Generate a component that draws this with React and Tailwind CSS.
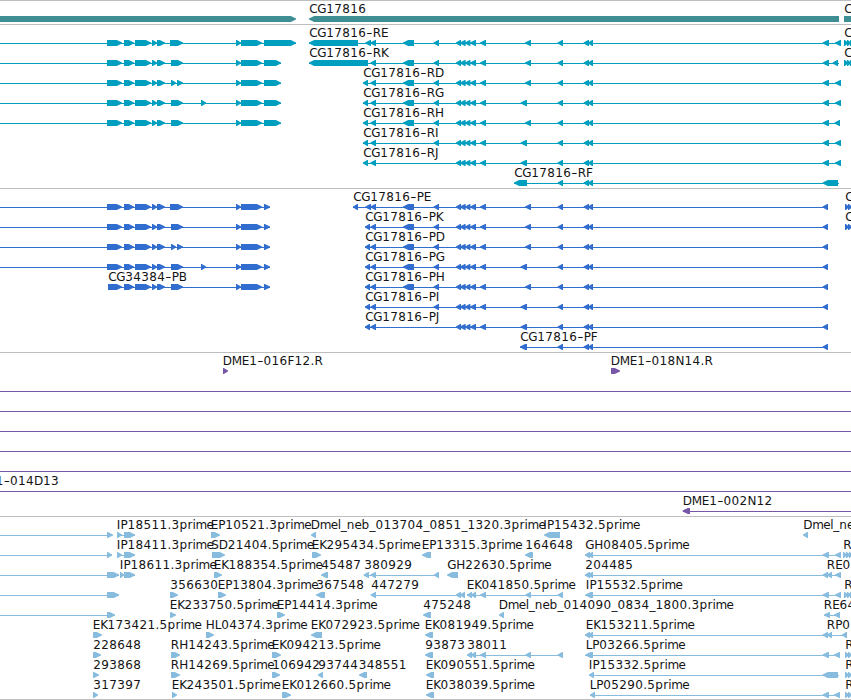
import React from 'react';

const ADVANCE = {
  C: 8, G: 9, D: 9, M: 10, E: 7.4, K: 7.4, R: 8.4, H: 9, L: 6.5, P: 7, I: 3.6, J: 4, F: 7, N: 9, S: 7.5,
  '-': 6.4, '.': 4, _: 6, p: 8, r: 5, i: 3, m: 11, e: 7, l: 3, n: 7.6, b: 8,
};

const placed = (text, start) => {
  let x = start;
  return text.split(/(-)/).map((part) => {
    const xs = [...part].map((ch) => {
      const at = x;
      x += ADVANCE[ch] ?? 8;
      return at;
    });
    return { part, xs };
  });
};

function Label({ text, x }) {
  return (
    <text y="10" fontSize="12" fill="#141414">
      {placed(text, x).map(({ part, xs }, i) => (part === '-'
        ? <tspan key={i} x={xs[0]} textLength="6.2" lengthAdjust="spacingAndGlyphs">-</tspan>
        : <tspan key={i} x={xs.join(' ')}>{part}</tspan>))}
    </text>
  );
}

const right = (...spans) => ({ dir: 1, spans });
const left = (...spans) => ({ dir: -1, spans });
const feature = (label, x, glyph, from, to) => ({ label, x, ...glyph, from, to });

const shape = ([a, b], dir, flat) => {
  if (flat) return `M${a} 13H${b}V19H${a}Z`;
  const tip = Math.min(6, b - a);
  return dir > 0
    ? `M${a} 13H${b - tip + 0.8}L${b} 15.6V16.4L${b - tip + 0.8} 19H${a}Z`
    : `M${b} 13H${a + tip - 0.8}L${a} 15.6V16.4L${a + tip - 0.8} 19H${b}Z`;
};

function Row({ items, color }) {
  return (
    <svg className="block h-5 w-full shrink-0 overflow-hidden" viewBox="0 0 851 20">
      {items.map((f, i) => (
        <g key={i}>
          {f.from !== undefined && <rect x={f.from} y="16" width={f.to - f.from} height="1" fill={color} />}
          {f.spans.map((s, j) => <path key={j} d={shape(s, f.dir, f.flat)} fill={color} />)}
        </g>
      ))}
      {items.filter((f) => f.label).map((f) => <Label key={f.label + f.x} text={f.label} x={f.x + 0.3} />)}
    </svg>
  );
}

function Track({ rows, color, last }) {
  return (
    <section className={last ? 'flex flex-col border-y border-[#bebebe] pt-[2px]' : 'flex flex-col border-t border-[#bebebe] pt-[2px] pb-px'}>
      {rows.map((items, i) => <Row key={i} items={items} color={color} />)}
    </section>
  );
}

const lead = [[124, 134], [135, 151], [152, 157], [157, 165]];
const tail = [[236, 241], [241, 262]];
const forward = (start, middle, end) => ({
  ...right([start, 122], ...lead, ...middle, ...tail, end),
  from: start === 107 ? 0 : start,
  to: end[1],
});
const middles = [[[170, 183]], [[171, 183]], [[171, 176], [177, 183]], [[171, 183], [201, 206]], [[171, 183]]];

const wide = [403, 414];
const small = [433.6, 439];
const cluster = [[456, 461], [460, 465.6], [465, 470.4], [470, 476], [480, 486]];
const near = [525, 531];
const far = [520.6, 527];
const common = [[557.6, 563], [583.6, 589], [588, 593]];
const reverse = (label, x, head, body, end, to) =>
  feature(label, x, left(...head, ...body, ...common, ...end), x, to);

const fullBody = [wide, small, ...cluster, near];
const farBody = [wide, small, ...cluster, far];
const noWide = [small, ...cluster, far];
const noSmall = [...cluster, far];

const rEnd = [[822.6, 829], [835, 841]];
const rHead = [[363, 368], [370.4, 376]];
const edge = (x, label = 'CG') => feature(label, x, right([x, x + 4], [x + 3, x + 7], [x + 6, x + 10]), x, 851);

const genes = [[
  right([-20, 296]),
  feature('CG17816', 309, left([309, 839])),
  { ...feature('CG', 844, right([844, 860])), flat: true },
]];

const transcripts = [
  [forward(107, middles[0], [264, 296]), reverse('CG17816-RE', 309, [[309, 358], [365.4, 371], [370.4, 376]], fullBody, rEnd, 841), edge(844)],
  [forward(107, middles[1], [264, 281]), reverse('CG17816-RK', 309, [[309, 368], [370.4, 376]], fullBody, [[822.6, 829], [832.6, 838]], 839), edge(844)],
  [forward(107, middles[2], [264, 281]), reverse('CG17816-RD', 363, rHead, fullBody, rEnd, 841)],
  [forward(107, middles[3], [264, 281]), reverse('CG17816-RG', 363, rHead, farBody, rEnd, 841)],
  [forward(107, middles[4], [264, 281]), reverse('CG17816-RH', 363, rHead, fullBody, [[822.6, 829], [834.6, 840]], 840)],
  [reverse('CG17816-RI', 363, rHead, noWide, rEnd, 841)],
  [reverse('CG17816-RJ', 363, rHead, noSmall, rEnd, 841)],
  [reverse('CG17816-RF', 514, [[514, 527]], [], [[822.6, 838]], 839)],
];

const pEnd = [[822.6, 828]];
const pHead = [[365, 370], [370.4, 376]];
const proteins = [
  [forward(107, middles[0], [264, 270]), reverse('CG17816-PE', 353, [[353, 358], [365.4, 371], [370.4, 376]], fullBody, pEnd, 828), edge(845)],
  [forward(107, middles[1], [264, 270]), reverse('CG17816-PK', 365, pHead, fullBody, pEnd, 828), edge(845)],
  [forward(107, middles[2], [264, 270]), reverse('CG17816-PD', 365, pHead, fullBody, pEnd, 828)],
  [forward(107, middles[3], [264, 270]), reverse('CG17816-PG', 365, pHead, farBody, pEnd, 828)],
  [{ ...forward(108, middles[4], [264, 270]), label: 'CG34384-PB', x: 108 }, reverse('CG17816-PH', 365, pHead, fullBody, pEnd, 828)],
  [reverse('CG17816-PI', 365, pHead, noWide, pEnd, 828)],
  [reverse('CG17816-PJ', 365, pHead, noSmall, pEnd, 828)],
  [reverse('CG17816-PF', 520, [[520, 527]], [], pEnd, 828)],
];

const through = (label, x) => feature(label, x, right(), 0, 851);
const clones = [
  [feature('DME1-016F12.R', 222.5, right([223, 228])), feature('DME1-018N14.R', 610.5, right([611, 620]))],
  [through()], [through()], [through()], [through()], [through()],
  [through('DME1-014D13', -31)],
  [feature('DME1-002N12', 682.5, left([682.6, 690]), 683, 851)],
];

const pair = [[585, 590], [588, 593]];
const single = [[585.4, 593]];
const five = [[467, 472], [471, 476], [480, 486], [525.4, 531], [557.6, 563]];
const ests = [
  [
    feature('', 0, right([107, 113]), 0, 112),
    feature('IP18511.3prime', 116.5, right([117, 122], [124, 135]), 117, 135),
    feature('EP10521.3prime', 210.5, right([211, 220])),
    feature('Dmel_neb_013704_0851_1320.3prime', 310.5, left([311, 316])),
    feature('IP15432.5prime', 543, left([544, 560])),
    feature('Dmel_neb', 803, left([803, 808])),
  ],
  [
    feature('', 0, right([107, 112]), 0, 112),
    feature('IP18411.3prime', 116.5, right([117, 122], [124, 135]), 117, 135),
    feature('SD21404.5prime', 211, right([212, 225])),
    feature('EK295434.5prime', 311.5, right([312, 321])),
    feature('EP13315.3prime', 421.5, left([422, 431])),
    feature('164648', 525, left([525, 533])),
    feature('GH08405.5prime', 585, left(...pair, [822.6, 829], [835, 841]), 585, 841),
    edge(843, 'RE'),
  ],
  [
    feature('', 0, right([107, 119]), 0, 119),
    feature('IP18611.3prime', 119.5, right([120, 124], [124, 135]), 120, 135),
    feature('EK188354.5prime', 213.5, right([214, 222])),
    feature('45487', 321, left([321, 328])),
    feature('380929', 364, left([363.6, 369], [370.4, 376], [434, 439]), 364, 439),
    feature('GH22630.5prime', 447, left([447, 458])),
    feature('204485', 585, left(...pair, [822.6, 828], [827, 832], [835, 841]), 585, 841),
    feature('RE0', 826.5, right()),
  ],
  [
    feature('', 0, right([107, 119]), 0, 119),
    feature('356630', 170, right([170, 178])),
    feature('EP13804.3prime', 217.5, right([218, 226])),
    feature('367548', 316, left([316, 325])),
    feature('447279', 371, left([370.6, 376], [456, 461], [460, 465]), 371, 465),
    feature('EK041850.5prime', 466.5, left(...five), 467, 563),
    feature('IP15532.5prime', 585.5, left(...single, [822.6, 829], [835, 841]), 585, 841),
    edge(844, 'RE'),
  ],
  [
    feature('', 0, right([107, 115]), 0, 115),
    feature('EK233750.5prime', 169.5, right([170, 176])),
    feature('EP14414.3prime', 276.5, right([277, 285])),
    feature('475248', 423, left([423, 431])),
    feature('Dmel_neb_014090_0834_1800.3prime', 498.5, left([499, 504])),
    feature('RE64', 823.5, left([824, 830], [834, 840]), 824, 840),
  ],
  [
    feature('EK173421.5prime', 92.5, right([93, 102])),
    feature('HL04374.3prime', 205.5, right([206, 214])),
    feature('EK072923.5prime', 310.5, left([311, 322])),
    feature('EK081949.5prime', 424.5, left([425, 433])),
    feature('EK153211.5prime', 585.5, left(...pair, [822.6, 828], [827, 832], [842, 847]), 585, 847),
    feature('RP0', 826.5, right()),
  ],
  [
    feature('228648', 93, right([93, 101])),
    feature('RH14243.5prime', 170.5, right([171, 180])),
    feature('EK094213.5prime', 271.5, right([272, 281])),
    feature('93873', 425, left([425, 433])),
    feature('38011', 467, left(...five), 467, 563),
    feature('LP03266.5prime', 585.5, left(...single, [822.6, 829], [834, 840]), 585, 840),
    edge(845, 'RE'),
  ],
  [
    feature('293868', 93, right([93, 99])),
    feature('RH14269.5prime', 170.5, right([171, 180])),
    feature('106942', 272, right([272, 280])),
    feature('93744', 318, left([318, 323])),
    feature('348551', 358.5, left([359, 367])),
    feature('EK090551.5prime', 425.5, left([426, 434])),
    feature('IP15332.5prime', 588.5, left([589, 594], [822.6, 838]), 589, 839),
    edge(845, 'RE'),
  ],
  [
    feature('317397', 93, right([93, 98])),
    feature('EK243501.5prime', 171.5, right([172, 177])),
    feature('EK012660.5prime', 281.5, right([282, 291])),
    feature('EK038039.5prime', 425.5, left([426, 434])),
    feature('LP05290.5prime', 589.5, left([590, 595], [822.6, 829], [834, 840]), 590, 840),
    edge(845, 'RE'),
  ],
];

export default function App() {
  return (
    <main className="flex h-[700px] w-[851px] flex-col overflow-hidden bg-white font-['DejaVu_Sans',sans-serif]">
      <Track rows={genes} color="#3e8e94" />
      <Track rows={transcripts} color="#009ebf" />
      <Track rows={proteins} color="#306dce" />
      <Track rows={clones} color="#7758a6" />
      <Track rows={ests} color="#87bcde" last />
    </main>
  );
}
